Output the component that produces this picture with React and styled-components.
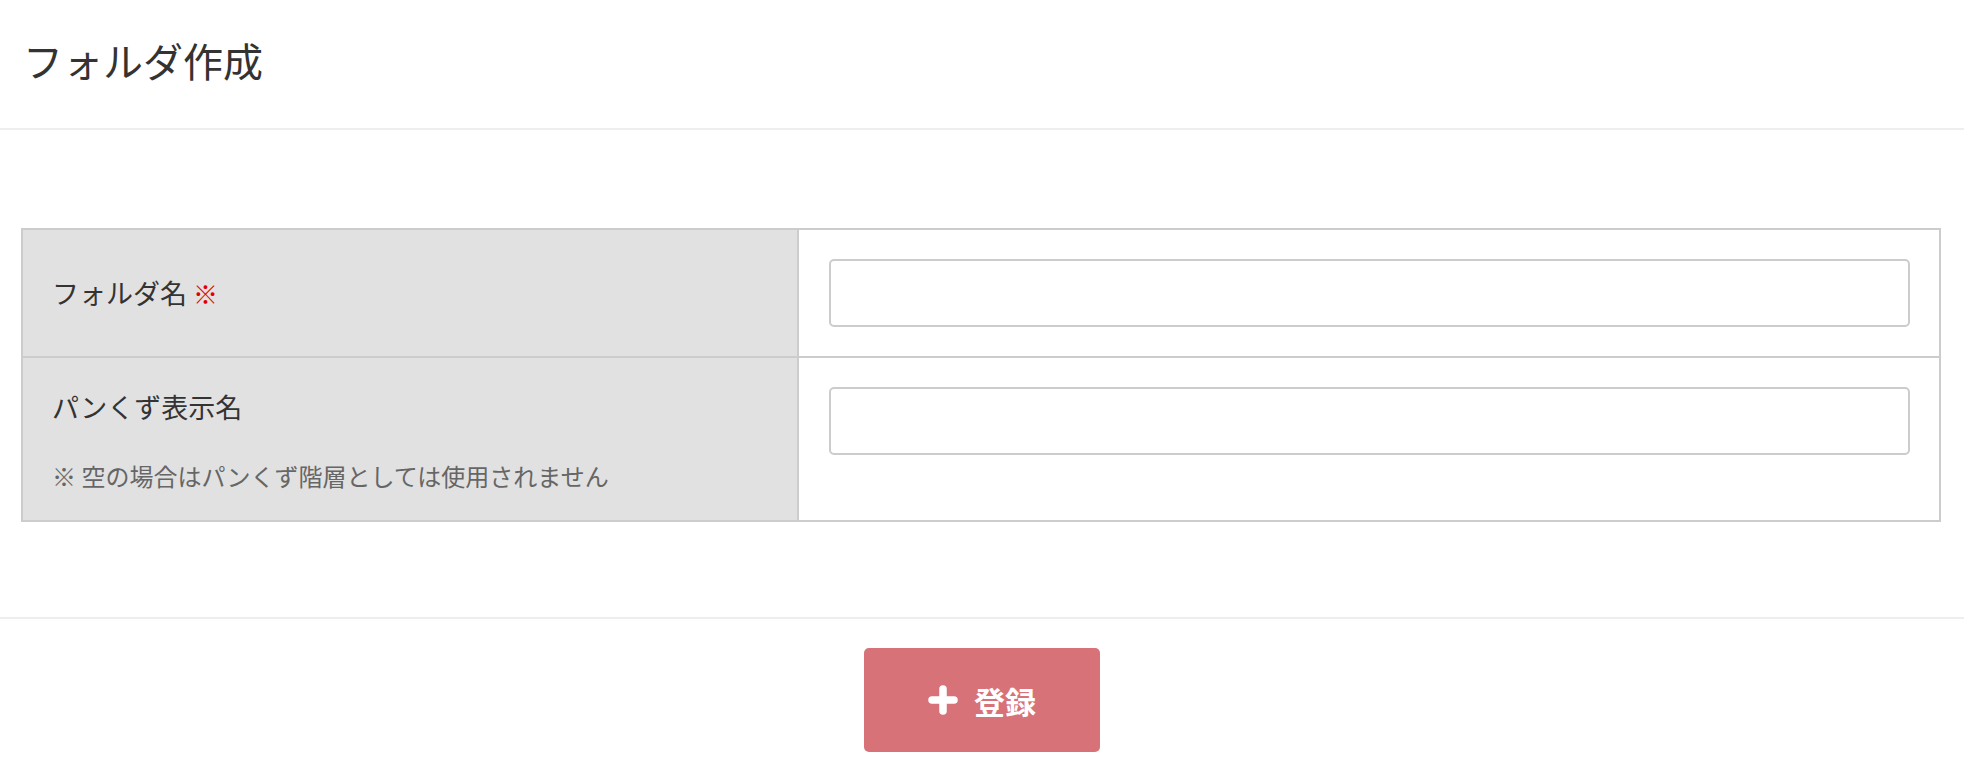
import React from "react";
import styled, { createGlobalStyle } from "styled-components";

const Global = createGlobalStyle`
  html, body { margin: 0; padding: 0; background: #fff; }
  body { font-family: "Noto Sans CJK JP", "Noto Sans", sans-serif; color: #333; }
  * { box-sizing: border-box; }
`;

const Header = styled.header`
  height: 130px;
  border-bottom: 2px solid #eeeeee;
  display: flex;
  align-items: center;
  padding: 0 0 8px 23px;
`;

const Title = styled.h1`
  margin: 0;
  font-size: 40px;
  font-weight: 400;
  color: #333;
  line-height: 1.3;
`;

const Body = styled.main`
  padding: 98px 23px 95px 21px;
`;

const FormTable = styled.div`
  border: 2px solid #cccccc;
`;

const Row = styled.div`
  display: grid;
  grid-template-columns: 776px 1fr;
  & + & { border-top: 2px solid #cccccc; }
`;

const LabelCell = styled.div`
  background: #e1e1e1;
  border-right: 2px solid #cccccc;
  padding: 29px 29px;
  display: flex;
  flex-direction: column;
  justify-content: ${(p) => (p.$center ? "center" : "flex-start")};
`;

const Label = styled.div`
  font-size: 27px;
  line-height: 40px;
  color: #333;
`;

const Required = styled.span`
  color: #e00000;
  margin-left: 6px;
  font-size: 25px;
`;

const Note = styled.div`
  margin-top: 34px;
  font-size: 24px;
  line-height: 30px;
  color: #666;
`;

const InputCell = styled.div`
  padding: 29px 29px 29px 30px;
  background: #fff;
`;

const TextInput = styled.input`
  display: block;
  width: 100%;
  height: 68px;
  border: 2px solid #cccccc;
  border-radius: 5px;
  background: #fff;
  font-size: 24px;
  padding: 0 14px;
  outline: none;
`;

const Footer = styled.footer`
  border-top: 2px solid #eeeeee;
  padding-top: 29px;
  display: flex;
  justify-content: center;
`;

const SubmitButton = styled.button`
  width: 236px;
  height: 104px;
  border: none;
  border-radius: 5px;
  background: #d77278;
  color: #fff;
  font-family: "Noto Sans CJK JP", sans-serif;
  font-size: 31px;
  font-weight: 700;
  display: flex;
  align-items: center;
  justify-content: center;
  gap: 16px;
  cursor: pointer;
  padding: 0;
`;

const PlusIcon = () => (
  <svg width="30" height="30" viewBox="0 0 30 30">
    <path d="M15 4v22M4 15h22" stroke="#fff" strokeWidth="7.5" strokeLinecap="round" />
  </svg>
);

export default function App() {
  return (
    <>
      <Global />
      <Header>
        <Title>フォルダ作成</Title>
      </Header>
      <Body>
        <FormTable>
          <Row>
            <LabelCell $center>
              <Label>
                フォルダ名<Required>※</Required>
              </Label>
            </LabelCell>
            <InputCell>
              <TextInput type="text" />
            </InputCell>
          </Row>
          <Row>
            <LabelCell>
              <Label>パンくず表示名</Label>
              <Note>※ 空の場合はパンくず階層としては使用されません</Note>
            </LabelCell>
            <InputCell>
              <TextInput type="text" />
            </InputCell>
          </Row>
        </FormTable>
      </Body>
      <Footer>
        <SubmitButton type="button">
          <PlusIcon />
          <span>登録</span>
        </SubmitButton>
      </Footer>
    </>
  );
}
